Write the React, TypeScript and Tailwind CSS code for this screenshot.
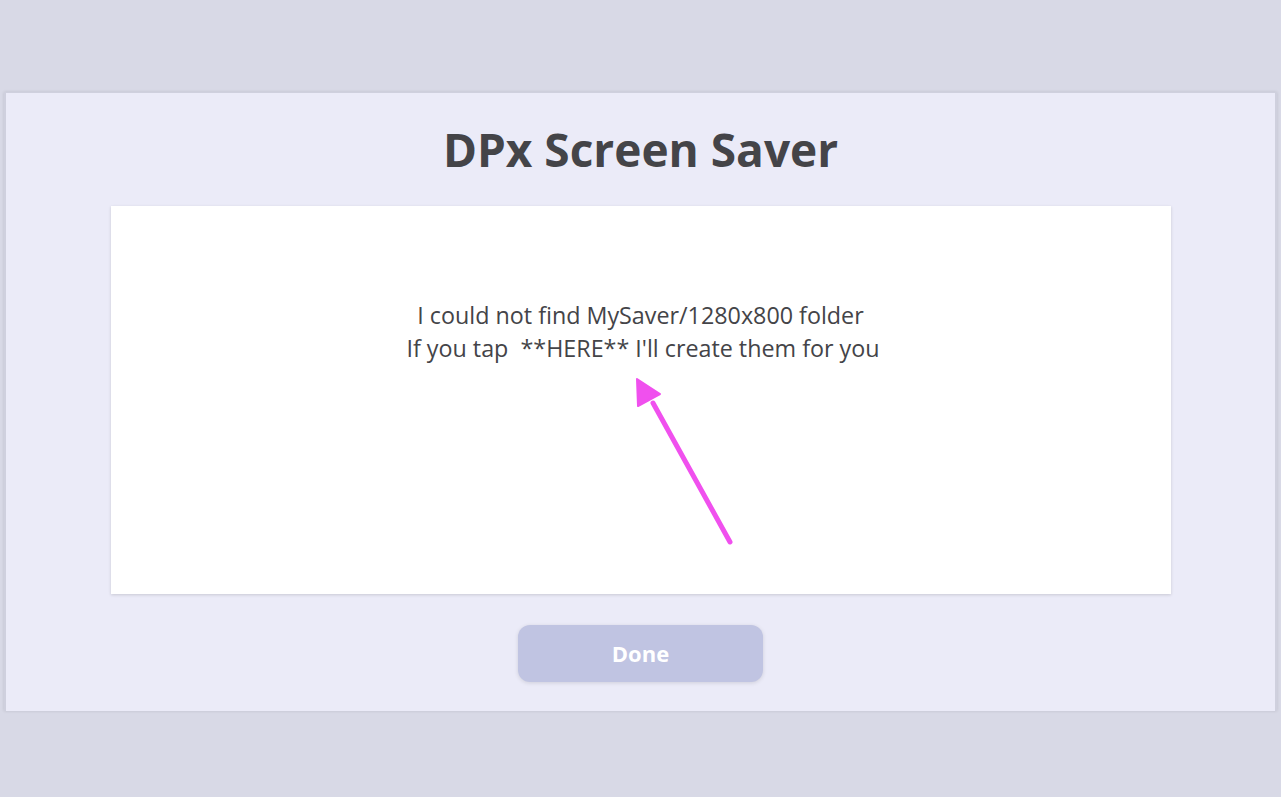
import React from 'react';

const App: React.FC = () => {
  return (
    <div className="w-[1281px] h-[797px] bg-[#d8d9e6] flex flex-col" style={{ fontFamily: '"Open Sans", "Noto Sans", sans-serif' }}>
      <div className="h-[92px] shrink-0" />
      <div className="ml-[4px] mr-[4px] h-[619px] bg-[#ebebf8] border-l-2 border-r-2 border-t border-[#cfd0de] flex flex-col items-center shadow-[0_0_3px_rgba(0,0,0,0.12)]">
        <h1 className="mt-[25px] text-[46px] leading-[62px] font-bold text-[#444448]">DPx Screen Saver</h1>
        <div className="mt-[26px] w-[1060px] h-[388px] bg-white shadow-[0_1px_3px_rgba(0,0,0,0.15)] relative flex flex-col items-center">
          <div className="mt-[93px] text-[23.3px] leading-[33px] text-[#444448] text-center whitespace-pre">
            <div>I could not find MySaver/1280x800 folder</div>
            <div className="pl-[5px]">If you tap  **HERE** I'll create them for you</div>
          </div>
          <svg className="absolute left-[510px] top-[165px]" width="130" height="180" viewBox="0 0 130 180">
            <line x1="109" y1="171" x2="32" y2="32" stroke="#f050ee" strokeWidth="5" strokeLinecap="round" />
            <polygon points="16,8 39,23 17,35" fill="#f050ee" stroke="#f050ee" strokeWidth="2" strokeLinejoin="round" />
          </svg>
        </div>
        <button className="mt-[31px] w-[245px] h-[57px] rounded-[12px] bg-[#c0c4e2] text-white text-[22px] font-bold shadow-[0_1px_4px_rgba(0,0,0,0.12)]">
          Done
        </button>
      </div>
    </div>
  );
};

export default App;
